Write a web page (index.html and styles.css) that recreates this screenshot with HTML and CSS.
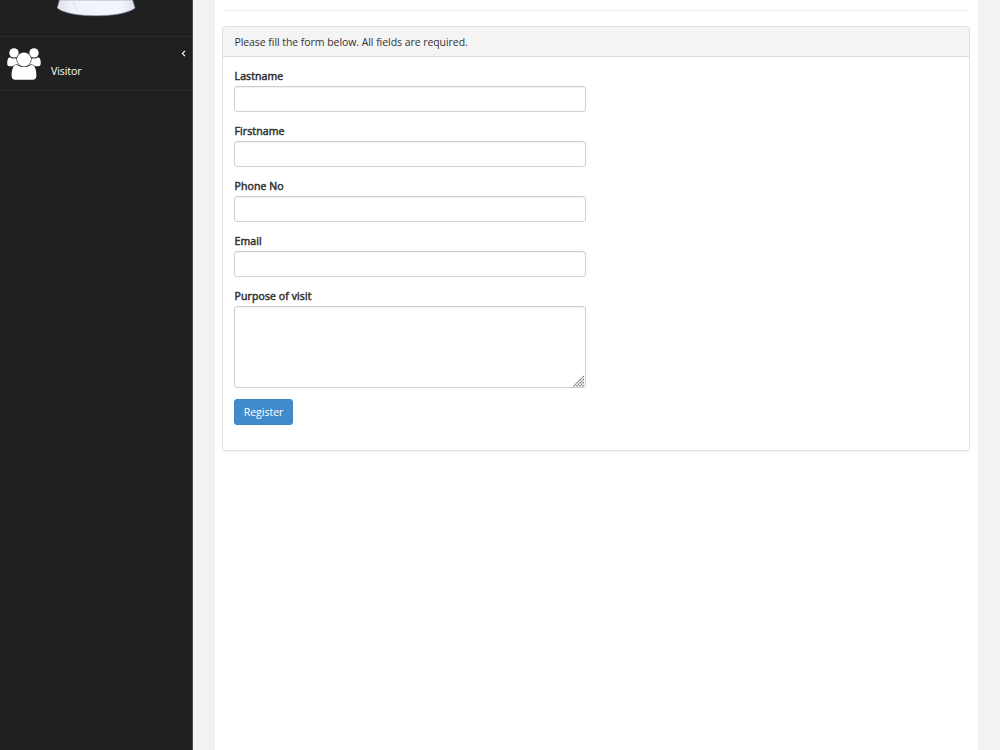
FILE: index.html
```html
<!DOCTYPE html>
<html lang="en">
<head>
<meta charset="utf-8">
<title>Visitor Registration</title>
<link rel="stylesheet" href="styles.css">
</head>
<body>
<div class="layout">
  <nav class="sidebar">
    <div class="profile">
      <svg class="avatar" width="80" height="18" viewBox="0 0 80 18">
        <defs>
          <linearGradient id="coat" x1="0" y1="0" x2="1" y2="0">
            <stop offset="0" stop-color="#dfe2ef"/>
            <stop offset=".2" stop-color="#f2f3f9"/>
            <stop offset=".8" stop-color="#f5f6fb"/>
            <stop offset="1" stop-color="#dfe2ef"/>
          </linearGradient>
        </defs>
        <path d="M3.500 0 1.300 8C8 13.500 24 15.700 40 15.700S72 13.500 79 8L76.500 0Z" fill="url(#coat)" stroke="#8d99b0" stroke-width=".7"/>
        <path d="M17 2l4 9" stroke="#e2e4ee" stroke-width="1.500" fill="none"/>
      </svg>
    </div>
    <a class="menu-item">
      <svg class="users" width="34" height="33" viewBox="0 0 34 33" fill="#fff">
        <circle cx="7" cy="4.900" r="4.700"/>
        <circle cx="27" cy="4.900" r="4.700"/>
        <path d="M2.600 9.200Q7 12 12 9.200V18.200H2.500Q.2 18.200.2 15.600Q.2 10 2.600 9.200Z"/>
        <path d="M31.400 9.200Q27 12 22 9.200V18.200H31.500Q33.800 18.200 33.800 15.600Q33.800 10 31.400 9.200Z"/>
        <path class="front" d="M9.500 16.800Q17 21.300 24.500 16.800C28 17.200 29.400 22 29.400 27.500Q29.400 31.700 25.600 31.700H8.400Q4.600 31.700 4.600 27.500C4.600 22 6 17.200 9.500 16.800Z"/>
        <circle class="front" cx="17" cy="11.500" r="7"/>
      </svg>
      <span class="menu-text">Visitor</span>
      <svg class="arrow" width="5" height="7" viewBox="0 0 5 7"><path d="M4 .8 1.300 3.500 4 6.200" fill="none" stroke="#fff" stroke-width="1.100"/></svg>
    </a>
  </nav>
  <div class="wrapper">
    <main class="content">
      <hr class="rule">
      <section class="panel">
        <div class="panel-heading">Please fill the form below. All fields are required.</div>
        <form class="panel-body">
          <div class="field"><label class="label" for="last">Lastname</label><input class="control" id="last"></div>
          <div class="field"><label class="label" for="first">Firstname</label><input class="control" id="first"></div>
          <div class="field"><label class="label" for="phone">Phone No</label><input class="control" id="phone"></div>
          <div class="field"><label class="label" for="email">Email</label><input class="control" id="email"></div>
          <div class="field"><label class="label" for="purpose">Purpose of visit</label>
            <div class="area-wrap"><textarea class="control area" id="purpose"></textarea>
            <svg class="grip" width="12" height="12" viewBox="0 0 12 12"><path d="M.5 11.500 11 1M3.500 11.500 11 4M6.500 11.500 11 7M9.500 11.500 11 10" stroke="#777" stroke-width="1.100" stroke-dasharray="1.800 .4"/></svg></div>
          </div>
          <button class="button" type="button">Register</button>
        </form>
      </section>
    </main>
  </div>
</div>
</body>
</html>
```

FILE: styles.css
```css
* { box-sizing: border-box; }
body { margin: 0; font: 10.5px/15px "Open Sans", sans-serif; color: #333; background: #f2f2f2; overflow: hidden; }
.layout { display: flex; height: 750px; }
.sidebar { width: 193px; background: #202020; border-right: 1px solid #4b4b4b; }
.profile { height: 37px; padding-left: 56px; border-bottom: 1px solid #2b2b2b; }
.avatar { display: block; }
.menu-item { display: flex; height: 54px; border-bottom: 1px solid #2b2b2b; padding: 11px 6px 0 7px; color: #fff; }
.users { display: block; flex: none; }
.front { stroke: #202020; stroke-width: 1.2px; paint-order: stroke; }
.menu-text { margin: 16px 0 0 10px; letter-spacing: -.05px; }
.arrow { margin: 2px 0 0 auto; }
.wrapper { flex: 1; padding: 0 22px; }
.content { height: 750px; background: #fff; padding: 10px 8px 0 7px; }
.rule { margin: 0 0 15px; border: 0; border-top: 1px solid #eee; height: 1px; }
.panel { height: 425px; border: 1px solid #e0e0e0; border-radius: 3px; box-shadow: 0 1px 1px rgba(0, 0, 0, .06); }
.panel-heading { height: 30px; background: #f4f4f4; border-bottom: 1px solid #ddd; padding: 8px 11.4px 0; border-radius: 2px 2px 0 0; letter-spacing: -.055px; }
.panel-body { padding: 12px 11px 0; }
.field { width: 352px; height: 54.9px; }
.label { display: block; height: 17.4px; padding-left: .6px; letter-spacing: .1px; -webkit-text-stroke: .5px #333; }
.control { display: block; width: 100%; height: 25.6px; border: 1px solid #d0d0d0; border-radius: 3px; background: #fff; box-shadow: inset 0 1px 1px rgba(0, 0, 0, .06); outline: 0; }
.area-wrap { position: relative; }
.area { height: 82.4px; resize: none; }
.grip { position: absolute; right: 1px; bottom: 1px; }
.field:nth-child(5) { height: 110.8px; }
.button { display: block; width: 59px; height: 25.6px; padding: 1px 0 0; border: 1px solid #3d86c5; border-radius: 3px; background: #428bca; color: #fff; font: inherit; }
```
